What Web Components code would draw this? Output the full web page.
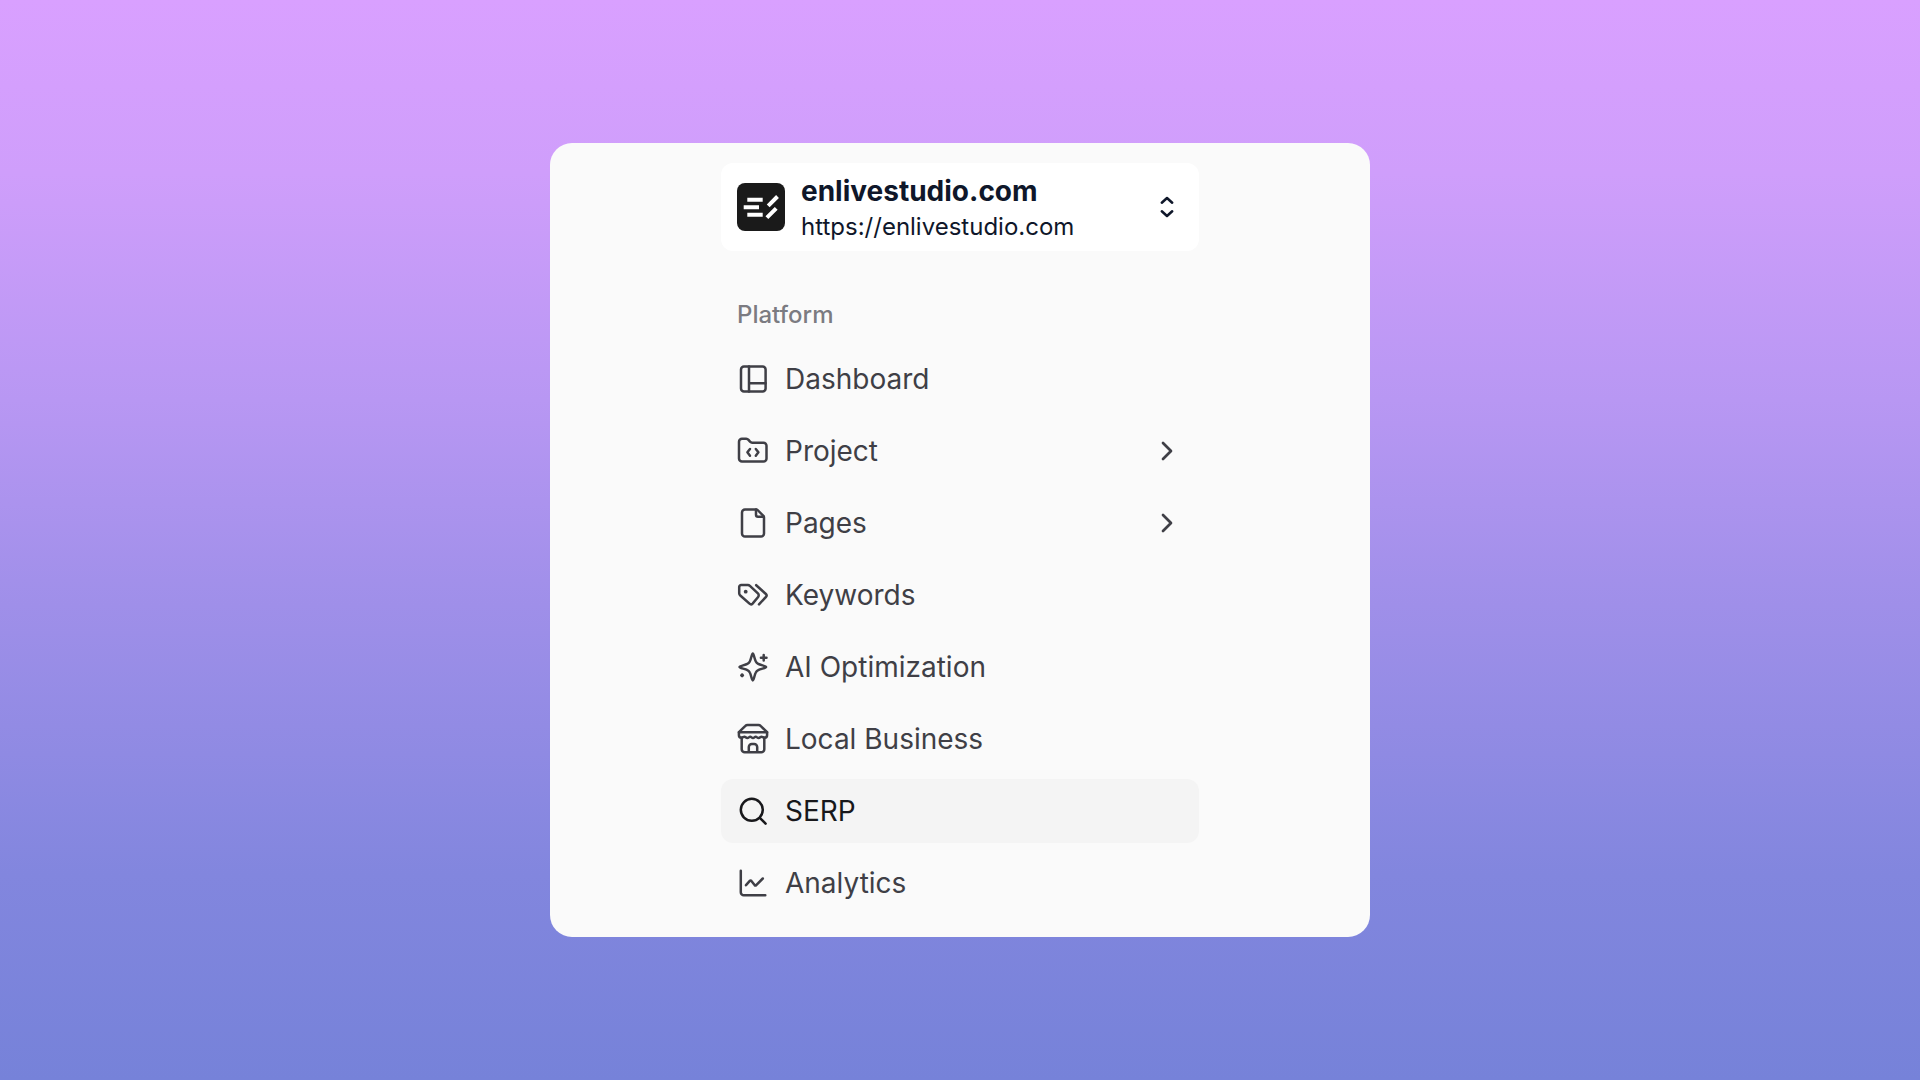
<!DOCTYPE html>
<html lang="en">
<head>
<meta charset="utf-8">
<title>Site navigation</title>
<style>
html { height: 100%; }
body { display: flex; margin: 0; min-height: 100%; font-family: Inter, "Liberation Sans", sans-serif; }
</style>
</head>
<body>
<app-stage>
  <site-card>
    <site-switcher name="enlivestudio.com" url="https://enlivestudio.com"></site-switcher>
    <nav-group heading="Platform">
      <nav-item icon="dashboard">Dashboard</nav-item>
      <nav-item icon="project" expandable>Project</nav-item>
      <nav-item icon="pages" expandable>Pages</nav-item>
      <nav-item icon="keywords">Keywords</nav-item>
      <nav-item icon="ai">AI Optimization</nav-item>
      <nav-item icon="store">Local Business</nav-item>
      <nav-item icon="search" active>SERP</nav-item>
      <nav-item icon="analytics">Analytics</nav-item>
    </nav-group>
  </site-card>
</app-stage>
<script>
const ICONS = {
  dashboard: '<rect x="4" y="3.6" width="24.6" height="24.8" rx="3"/><path d="M12 3.6v24.8M12 20.2h16.6"/>',
  project: '<path d="M5 3.8h4.2c1 0 1.7.4 2.3 1.1l1.7 1.9c.5.6 1.2.9 2 .9h11.3a3 3 0 0 1 3 3v12.9a3 3 0 0 1-3 3H5a3 3 0 0 1-3-3V6.8a3 3 0 0 1 3-3Z"/><path d="m13 14-2.6 3.3 2.6 3.4M18.8 14l2.6 3.3-2.6 3.4"/>',
  pages: '<path d="M8 2.4h11.2a2 2 0 0 1 1.4.6l5.8 5.8a2 2 0 0 1 .6 1.4v16.4a3 3 0 0 1-3 3H8a3 3 0 0 1-3-3V5.4a3 3 0 0 1 3-3Z"/><path d="M19 2.6v5.2a2 2 0 0 0 2 2h5.8"/>',
  keywords: '<path d="M4.2 6h6.6a3 3 0 0 1 2.1.8l8 7.6a2.7 2.7 0 0 1 0 3.9l-5.3 6.3a2.2 2.2 0 0 1-3.1.1l-9.2-8.2a3 3 0 0 1-1.1-2.3V8a2 2 0 0 1 2-2Z"/><path d="m19.2 6.2 9.7 8.8a2 2 0 0 1 .1 2.8l-7 7.6"/><circle cx="8.7" cy="12.7" r="1.9" fill="currentColor" stroke="none"/>',
  ai: '<path d="M15.8 2.6c-1 0-1.6 5.3-3 7.9-.6 1.2-1.2 1.8-2.4 2.4-2.6 1.4-7.9 2-7.9 3.1s5.3 1.7 7.9 3.1c1.2.6 1.8 1.2 2.4 2.4 1.4 2.6 2 7.9 3 7.9s1.6-5.3 3-7.9c.6-1.2 1.2-1.8 2.4-2.4 2.6-1.4 7.9-2 7.9-3.1s-5.3-1.7-7.9-3.1c-1.2-.6-1.8-1.2-2.4-2.4-1.4-2.6-2-7.9-3-7.9Z"/><path d="M26.700 3.9v5.600M23.900 6.700h5.600"/><path d="m5.100 23.500.8.8-.8.8-.8-.8Z"/>',
  store: '<path d="M1.900 12V9.200L8.400 2.900a3 3 0 0 1 2.100-.9h11a3 3 0 0 1 2.100.9l6.500 6.300V12c0 1.600-1 2.700-2.400 2.700-1.600 0-2.200-1-3.200-1s-1.600 1.400-2.900 1.400-1.800-1.400-2.900-1.400-1.500 1.400-2.700 1.400-1.700-1.400-2.800-1.400-1.600 1.400-2.900 1.400-1.900-1.400-2.900-1.400-1.600 1-3.100 1c-1.400 0-2.400-1.100-2.400-2.700Z"/><path d="M1.900 9.200h28.200M4.700 14.700v11.600a3 3 0 0 0 3 3h16.600a3 3 0 0 0 3-3V14.700M11.800 29.300v-5.300a3 3 0 0 1 3-3h2.400a3 3 0 0 1 3 3v5.300"/>',
  search: '<circle cx="14.800" cy="14.800" r="11"/><path d="m22.800 22.800 5.800 5.800"/>',
  analytics: '<path d="M3.800 3.800v21.500a3 3 0 0 0 3 3h21.500M9 18.200l4-4.500a.8.8 0 0 1 1.200 0l3.600 4.600a.8.8 0 0 0 1.200 0l6.800-6.800"/>',
  chevron: '<path d="m12 8 8 8-8 8" stroke-width="2.700"/>',
  updown: '<path d="m10.800 11.700 5.200-4.700 5.200 4.700M10.800 20.300l5.200 4.700 5.200-4.700"/>'
};

class UiIcon extends HTMLElement {
  constructor() {
    super();
    this.attachShadow({ mode: "open" });
  }
  connectedCallback() {
    this.shadowRoot.innerHTML = `<style>
      :host { display: block; flex: none; width: 32px; height: 32px; }
      svg { display: block; width: 100%; height: 100%; }
    </style>
    <svg viewBox="0 0 32 32" fill="none" stroke="currentColor" stroke-width="2.5" stroke-linecap="round" stroke-linejoin="round" aria-hidden="true">${ICONS[this.getAttribute("name")]}</svg>`;
  }
}

class AppStage extends HTMLElement {
  constructor() {
    super();
    this.attachShadow({ mode: "open" }).innerHTML = `<style>
      :host {
        display: flex; flex: 1; align-items: center; justify-content: center; min-height: 100vh;
        background: linear-gradient(180deg, #d9a0ff 0%, #cf9efb 16%, #b897f3 37%, #9f8fe9 56%, #8286de 81%, #7682d9 100%);
      }
    </style><slot></slot>`;
  }
}

class SiteCard extends HTMLElement {
  constructor() {
    super();
    this.attachShadow({ mode: "open" }).innerHTML = `<style>
      :host {
        display: flex; justify-content: center; box-sizing: border-box;
        width: 820px; max-width: 100%; padding: 20px 20px 22px; border-radius: 22px; background: #fafafa;
      }
      aside { display: flex; flex-direction: column; gap: 32px; flex: 0 1 478px; }
    </style><aside><slot></slot></aside>`;
  }
}

class SiteSwitcher extends HTMLElement {
  constructor() {
    super();
    this.attachShadow({ mode: "open" });
  }
  connectedCallback() {
    this.shadowRoot.innerHTML = `<style>
      :host { display: block; }
      button {
        display: flex; align-items: center; gap: 16px; box-sizing: border-box; width: 100%; height: 88px;
        padding: 0 16px; border: 0; border-radius: 12px; background: #fff; color: #0f172a;
        font: inherit; text-align: left; cursor: pointer;
      }
      .logo { flex: none; width: 48px; height: 48px; }
      .text { flex: 1; min-width: 0; padding-top: 4px; }
      strong, .url { display: block; line-height: 36px; white-space: nowrap; }
      strong { font-size: 28px; font-weight: 700; }
      .url { font-size: 24px; }
    </style>
    <button type="button" aria-haspopup="menu">
      <svg class="logo" viewBox="0 0 48 48" fill="none" stroke="#fff" stroke-width="4" aria-hidden="true">
        <rect width="48" height="48" rx="8" fill="#1a1a1a" stroke="none"/>
        <path d="M10.300 16.700h15.400M6.700 24.200H22M10.300 31.700h15.400M31.200 22.800l9.300-9.300M29.900 34.700l9.300-9.300"/>
      </svg>
      <span class="text"><strong></strong><span class="url"></span></span>
      <ui-icon name="updown"></ui-icon>
    </button>`;
    this.shadowRoot.querySelector("strong").textContent = this.getAttribute("name");
    this.shadowRoot.querySelector(".url").textContent = this.getAttribute("url");
  }
}

class NavGroup extends HTMLElement {
  constructor() {
    super();
    this.attachShadow({ mode: "open" });
  }
  connectedCallback() {
    this.shadowRoot.innerHTML = `<style>
      :host { display: block; }
      h2 { margin: 0; padding: 0 16px; font-size: 24px; line-height: 64px; font-weight: 500; color: #7b7b81; }
      nav { display: flex; flex-direction: column; gap: 8px; }
    </style>
    <h2 id="heading"></h2><nav aria-labelledby="heading"><slot></slot></nav>`;
    this.shadowRoot.querySelector("h2").textContent = this.getAttribute("heading");
  }
}

class NavItem extends HTMLElement {
  constructor() {
    super();
    this.attachShadow({ mode: "open" });
  }
  connectedCallback() {
    const chevron = this.hasAttribute("expandable") ? '<ui-icon name="chevron"></ui-icon>' : "";
    const current = this.hasAttribute("active") ? ' aria-current="page"' : "";
    this.shadowRoot.innerHTML = `<style>
      :host { display: block; color: #3f3f46; }
      :host([active]) { color: #18181b; }
      a {
        display: flex; align-items: center; gap: 16px; height: 64px; padding: 0 16px;
        border-radius: 12px; color: inherit; text-decoration: none; font-size: 28px; line-height: 40px;
      }
      a[aria-current] { background: #f4f4f4; }
      span { flex: 1; white-space: nowrap; }
    </style>
    <a href="#${this.getAttribute("icon")}"${current}><ui-icon name="${this.getAttribute("icon")}"></ui-icon><span><slot></slot></span>${chevron}</a>`;
  }
}

customElements.define("ui-icon", UiIcon);
customElements.define("app-stage", AppStage);
customElements.define("site-card", SiteCard);
customElements.define("site-switcher", SiteSwitcher);
customElements.define("nav-group", NavGroup);
customElements.define("nav-item", NavItem);
</script>
</body>
</html>
